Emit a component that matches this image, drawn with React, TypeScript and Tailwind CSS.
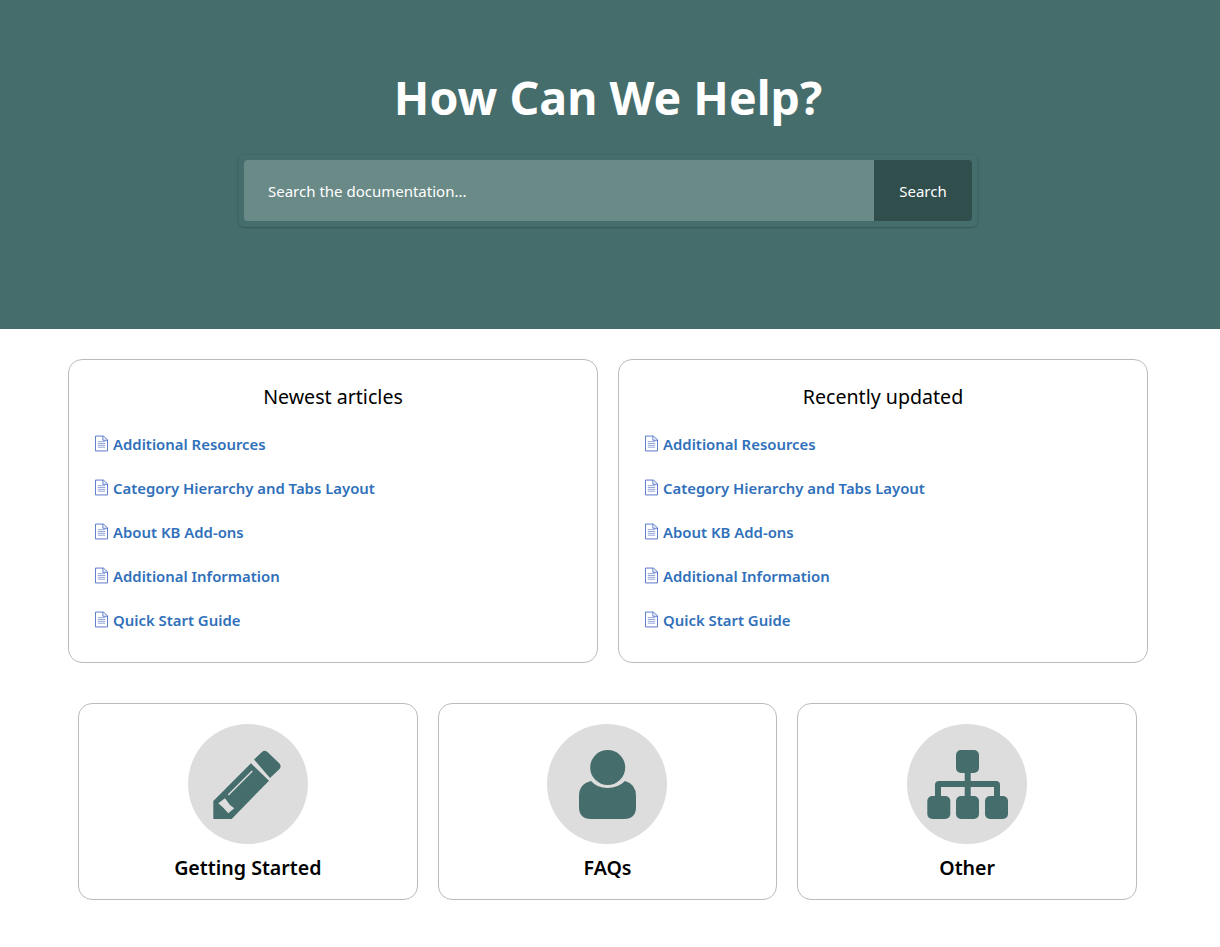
const links = [
  'Additional Resources',
  'Category Hierarchy and Tabs Layout',
  'About KB Add-ons',
  'Additional Information',
  'Quick Start Guide',
];

const DocIcon = () => (
  <svg viewBox="0 0 14 17" className="mb-[2px] ml-px h-[17px] w-[13px] shrink-0" fill="none">
    <path d="M0.5 0.5H9L13.5 4.5V16.5H0.5Z" stroke="#4f6fc8" strokeWidth="1" />
    <path d="M8.5 0.5V5H13.5" stroke="#4f6fc8" strokeWidth="1" />
    <path d="M3 6.5H11M3 8.5H11M3 10.5H11M3 12.5H11" stroke="#8e9fd6" strokeWidth="1" />
  </svg>
);

const PencilIcon = () => (
  <svg viewBox="0 0 120 120" className="h-[120px] w-[120px]">
    <path d="M25.3 95V77L63 39.3L81 56.7L43.7 95Z" fill="#456d6b" />
    <path d="M30.3 79.3L37 74.3L42 81L46.3 84.3L40.3 89.3L35.3 83.7Z" fill="#dddddd" />
    <path d="M40.3 71L64.3 47" stroke="#dddddd" strokeWidth="1.5" />
    <path d="M66 35.5L74 28Q77 25.5 80 28.5L91 39Q94 42 91.5 45L82 54Z" fill="#456d6b" />
  </svg>
);

const PersonIcon = () => (
  <svg viewBox="0 0 120 120" className="h-[120px] w-[120px]">
    <circle cx="60.7" cy="43.5" r="17.5" fill="#456d6b" />
    <path d="M44 57Q50 64 60.5 64Q71 64 78 57Q89 60 89 72V83Q89 95 77 95H44Q32 95 32 83V72Q32 60 44 57Z" fill="#456d6b" />
  </svg>
);

const TreeIcon = () => (
  <svg viewBox="0 0 120 120" className="h-[120px] w-[120px]" fill="#456d6b">
    <rect x="49" y="26" width="23" height="23" rx="5" />
    <rect x="20.3" y="72" width="23" height="23" rx="5" />
    <rect x="49" y="72" width="23" height="23" rx="5" />
    <rect x="78" y="72" width="23" height="23" rx="5" />
    <rect x="57.7" y="48" width="6" height="25" />
    <path d="M28 73V61Q28 57 32 57H89Q93 57 93 61V73H87V63H34V73Z" />
  </svg>
);

const ArticleCard = ({ title }: { title: string }) => (
  <div className="h-[304px] rounded-[14px] border border-[#bbbbbb] px-[25px] pt-[21px]">
    <h2 className="text-center text-[19.6px] leading-[32px] text-black">{title}</h2>
    <ul className="mt-[9px]">
      {links.map((link) => (
        <li key={link} className="flex h-[44px] items-center gap-[5px]">
          <DocIcon />
          <a className="text-[14.9px] font-semibold text-[#3070ba]">{link}</a>
        </li>
      ))}
    </ul>
  </div>
);

const categories = [
  { title: 'Getting Started', icon: <PencilIcon /> },
  { title: 'FAQs', icon: <PersonIcon /> },
  { title: 'Other', icon: <TreeIcon /> },
];

export default function App() {
  return (
    <div className="min-h-[947px] bg-white font-['Noto_Sans',sans-serif]">
      <header className="h-[329px] bg-[#456d6b] pt-[65px]">
        <div className="w-[1216px]">
          <h1 className="text-center text-[46.5px] leading-[64px] font-bold text-white">How Can We Help?</h1>
          <div className="mx-auto mt-[25px] flex h-[73px] w-[740px] rounded-md border border-[#426966] p-[5px] shadow-[0_1px_2px_rgba(0,0,0,0.2)]">
            <div className="flex flex-1 items-center rounded-l bg-[#6a8a87] pt-px pl-6 text-[15px] text-white">Search the documentation...</div>
            <button className="w-[98px] rounded-r bg-[#304e4c] pt-px text-[15px] text-white">Search</button>
          </div>
        </div>
      </header>
      <main className="w-[1216px]">
        <section className="mt-[30px] ml-[68px] grid w-[1080px] grid-cols-2 gap-5">
          <ArticleCard title="Newest articles" />
          <ArticleCard title="Recently updated" />
        </section>
        <section className="mt-10 ml-[78px] grid w-[1059px] grid-cols-3 gap-5">
          {categories.map((cat) => (
            <div key={cat.title} className="flex h-[197px] flex-col items-center rounded-[14px] border border-[#bbbbbb] pt-5">
              <div className="h-[120px] w-[120px] rounded-full bg-[#dddddd]">{cat.icon}</div>
              <h3 className="mt-[10px] text-[19.6px] leading-[28px] font-semibold text-black">{cat.title}</h3>
            </div>
          ))}
        </section>
      </main>
    </div>
  );
}
